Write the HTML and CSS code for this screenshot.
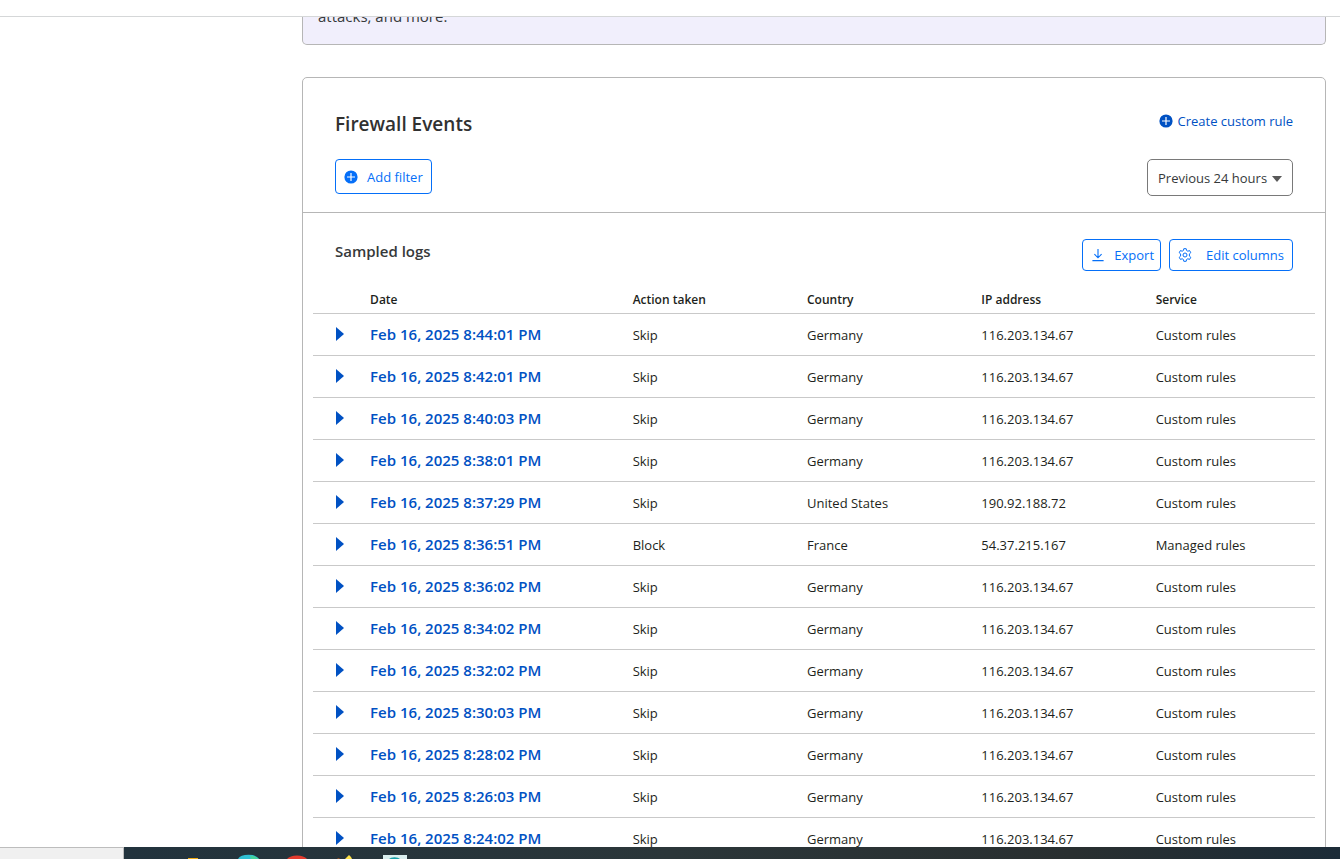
FILE: index.html
```html
<!DOCTYPE html>
<html lang="en">
<head>
<meta charset="utf-8">
<title>Firewall Events</title>
<link rel="stylesheet" href="styles.css">
</head>
<body>
<header class="topbar"></header>
<div class="workspace">
  <aside class="sidebar"></aside>
  <main class="content">
    <section class="notice"><p class="notice-text">attacks, and more.</p></section>
    <section class="card">
      <div class="card-head">
        <div class="head-row">
          <h1 class="title">Firewall Events</h1>
          <a class="create-link" href="#create">
            <svg class="icon-plus" viewBox="0 0 14 14" aria-hidden="true"><circle cx="7" cy="7" r="6.6" fill="currentColor"/><path d="M7 3v8M3 7h8" stroke="#fff" stroke-width="1.2"/></svg>
            Create custom rule
          </a>
        </div>
        <div class="filter-row">
          <button class="btn btn-filter" type="button">
            <svg class="icon-plus" viewBox="0 0 14 14" aria-hidden="true"><circle cx="7" cy="7" r="6.6" fill="currentColor"/><path d="M7 3v8M3 7h8" stroke="#fff" stroke-width="1.2"/></svg>
            Add filter
          </button>
          <div class="range">
            <select class="range-select" aria-label="Time range"><option>Previous 24 hours</option></select>
            <svg class="range-arrow" viewBox="0 0 10 6" aria-hidden="true"><path d="M0 0h10L5 6z" fill="currentColor"/></svg>
          </div>
        </div>
      </div>
      <div class="logs-head">
        <h2 class="subtitle">Sampled logs</h2>
        <div class="actions">
          <button class="btn btn-export" type="button">
            <svg class="icon" viewBox="0 0 14 14" fill="none" stroke="currentColor" stroke-width="1.1" aria-hidden="true"><path d="M7 1v8.6M3.4 6.2 7 9.8l3.6-3.6M1.4 12.6h11.2"/></svg>
            Export
          </button>
          <button class="btn btn-columns" type="button">
            <svg class="icon" viewBox="0 0 14 14" fill="none" stroke="currentColor" stroke-width="1" stroke-linejoin="round" aria-hidden="true"><path d="M5.8.7h2.4l.4 1.8 1.2.7 1.8-.6 1.2 2.1-1.4 1.2v2.2l1.4 1.2-1.2 2.1-1.8-.6-1.2.7-.4 1.8H5.8l-.4-1.8-1.2-.7-1.8.6-1.2-2.1 1.4-1.2V5.9L1.2 4.7l1.2-2.1 1.8.6 1.2-.7z"/><circle cx="7" cy="7" r="2"/></svg>
            Edit columns
          </button>
        </div>
      </div>
      <div class="table-wrap">
        <table class="logs">
          <colgroup><col class="col-toggle"><col class="col-date"><col class="col-data"><col class="col-data"><col class="col-data"><col class="col-data"></colgroup>
          <thead><tr><th></th><th scope="col">Date</th><th scope="col">Action taken</th><th scope="col">Country</th><th scope="col">IP address</th><th scope="col">Service</th></tr></thead>
          <tbody id="rows"></tbody>
        </table>
      </div>
    </section>
  </main>
</div>
<footer class="screen-foot">
  <div class="status"></div>
  <div class="taskbar">
    <svg class="task-icons" viewBox="0 0 300 12" aria-hidden="true">
      <path d="M64 12v-1h10v1z" fill="#f2ac12"/>
      <path d="M114 12a11 6 0 0 1 21 0z" fill="#2fc0d4"/><path d="M126 8.6a11 6 0 0 1 9 3.4h-8z" fill="#45d39b"/>
      <path d="M163 12a11 6 0 0 1 20 0z" fill="#e33b2e"/>
      <path d="M221 12l2-2 2-2 2 2 1 2z" fill="#ffe24a"/><path d="M213 12l1-1h2l-1 1z" fill="#8a4a22"/>
      <path d="M259 8h24v4h-24z" fill="#d9eeee"/><path d="M265 12a6 3 0 0 1 11 0z" fill="#17a0a8"/>
    </svg>
  </div>
</footer>
<script src="logs.js"></script>
</body>
</html>
```
FILE: styles.css
```css
* { box-sizing: border-box; }
body {
  margin: 0;
  height: 100vh;
  display: flex;
  flex-direction: column;
  overflow: hidden;
  background: #fff;
  color: #1d1f20;
  font: 13px/20px "Open Sans", "Noto Sans", sans-serif;
}
h1, h2, p { margin: 0; }
button, select { font: inherit; }
.topbar { flex: none; height: 17px; border-bottom: 1px solid #d5d7d8; }
.workspace { flex: 1; min-height: 0; display: flex; overflow: hidden; }
.sidebar { flex: none; width: 302px; }
.content { flex: 1; min-width: 0; padding-right: 14px; }
.notice {
  margin-top: -12px;
  padding: 0 15px 16px;
  border: 1px solid #b6b6b6;
  border-top: 0;
  border-radius: 0 0 5px 5px;
  background: #f1effc;
}
.notice-text { color: #36393a; font-size: 15px; line-height: 23px; }
.card { margin-top: 32px; border: 1px solid #b6b6b6; border-radius: 5px; }
.card-head { padding: 31px 32px 16px; border-bottom: 1px solid #b6b6b6; }
.head-row { display: flex; justify-content: space-between; align-items: flex-start; }
.title { color: #313131; font-size: 19px; line-height: 30px; font-weight: 600; }
.create-link {
  display: flex;
  align-items: center;
  gap: 5px;
  padding-top: 2px;
  color: #0051c3;
  text-decoration: none;
}
.icon-plus, .icon { flex: none; width: 14px; height: 14px; }
.filter-row { display: flex; justify-content: space-between; align-items: flex-start; margin-top: 20px; }
.btn {
  display: flex;
  align-items: center;
  height: 32px;
  padding: 0 8px;
  border: 1px solid #056ff8;
  border-radius: 4px;
  background: #fff;
  color: #056ff8;
}
.btn-filter { height: 35px; gap: 9px; }
.range { position: relative; }
.range-select {
  appearance: none;
  height: 37px;
  width: 146px;
  padding: 0 10px;
  border: 1px solid #797979;
  border-radius: 5px;
  background: #fff;
  color: #36393a;
}
.range-arrow { position: absolute; right: 11px; top: 17px; width: 10px; height: 6px; color: #595959; pointer-events: none; }
.logs-head { display: flex; justify-content: space-between; align-items: flex-start; padding: 26px 32px 0; }
.subtitle { color: #36393a; font-size: 15px; line-height: 25px; font-weight: 600; }
.actions { display: flex; gap: 8px; }
.btn-export { gap: 9px; padding-right: 6px; }
.btn-columns { gap: 14px; }
.table-wrap { padding: 14px 10px 0; }
.logs { width: 100%; table-layout: fixed; border-collapse: separate; border-spacing: 0; }
.col-toggle { width: 41px; }
.col-date { width: 26.2%; }
.col-data { width: 17.4%; }
.logs th, .logs td { padding: 0 0 0 15px; border-bottom: 1px solid #c9c9c9; text-align: left; white-space: nowrap; }
.logs th { height: 29px; padding-top: 2px; font-size: 12px; font-weight: 600; }
.logs td { height: 42px; }
.logs .toggle-cell { padding: 0 0 2px 23px; }
.toggle { display: block; padding: 0; border: 0; background: none; color: #0051c3; }
.toggle-icon { display: block; width: 8px; height: 14px; }
.date-link { color: #0051c3; font-size: 15px; font-weight: 600; text-decoration: none; }
.screen-foot { flex: none; display: flex; height: 12px; }
.status { width: 124px; border-top: 1px solid #bdbdbd; border-right: 1px solid #bdbdbd; background: #f0f0f0; }
.taskbar { flex: 1; overflow: hidden; background: linear-gradient(90deg, #22333d, #2b3639 45%, #292f30 78%, #1c2c38); }
.task-icons { display: block; width: 300px; height: 12px; }
```
FILE: logs.js
```js
const times = ["8:44:01", "8:42:01", "8:40:03", "8:38:01", "8:37:29", "8:36:51", "8:36:02", "8:34:02", "8:32:02", "8:30:03", "8:28:02", "8:26:03", "8:24:02"];
const details = {
  "8:37:29": ["Skip", "United States", "190.92.188.72", "Custom rules"],
  "8:36:51": ["Block", "France", "54.37.215.167", "Managed rules"]
};
const common = ["Skip", "Germany", "116.203.134.67", "Custom rules"];
document.getElementById("rows").innerHTML = times.map(time => {
  const cells = (details[time] || common).map(value => `<td>${value}</td>`).join("");
  return `<tr><td class="toggle-cell"><button class="toggle" type="button" aria-label="Expand ${time} PM"><svg class="toggle-icon" viewBox="0 0 8 14"><path d="M0 0l8 7-8 7z" fill="currentColor"/></svg></button></td><td><a class="date-link" href="#log">Feb 16, 2025 ${time} PM</a></td>${cells}</tr>`;
}).join("");
```
